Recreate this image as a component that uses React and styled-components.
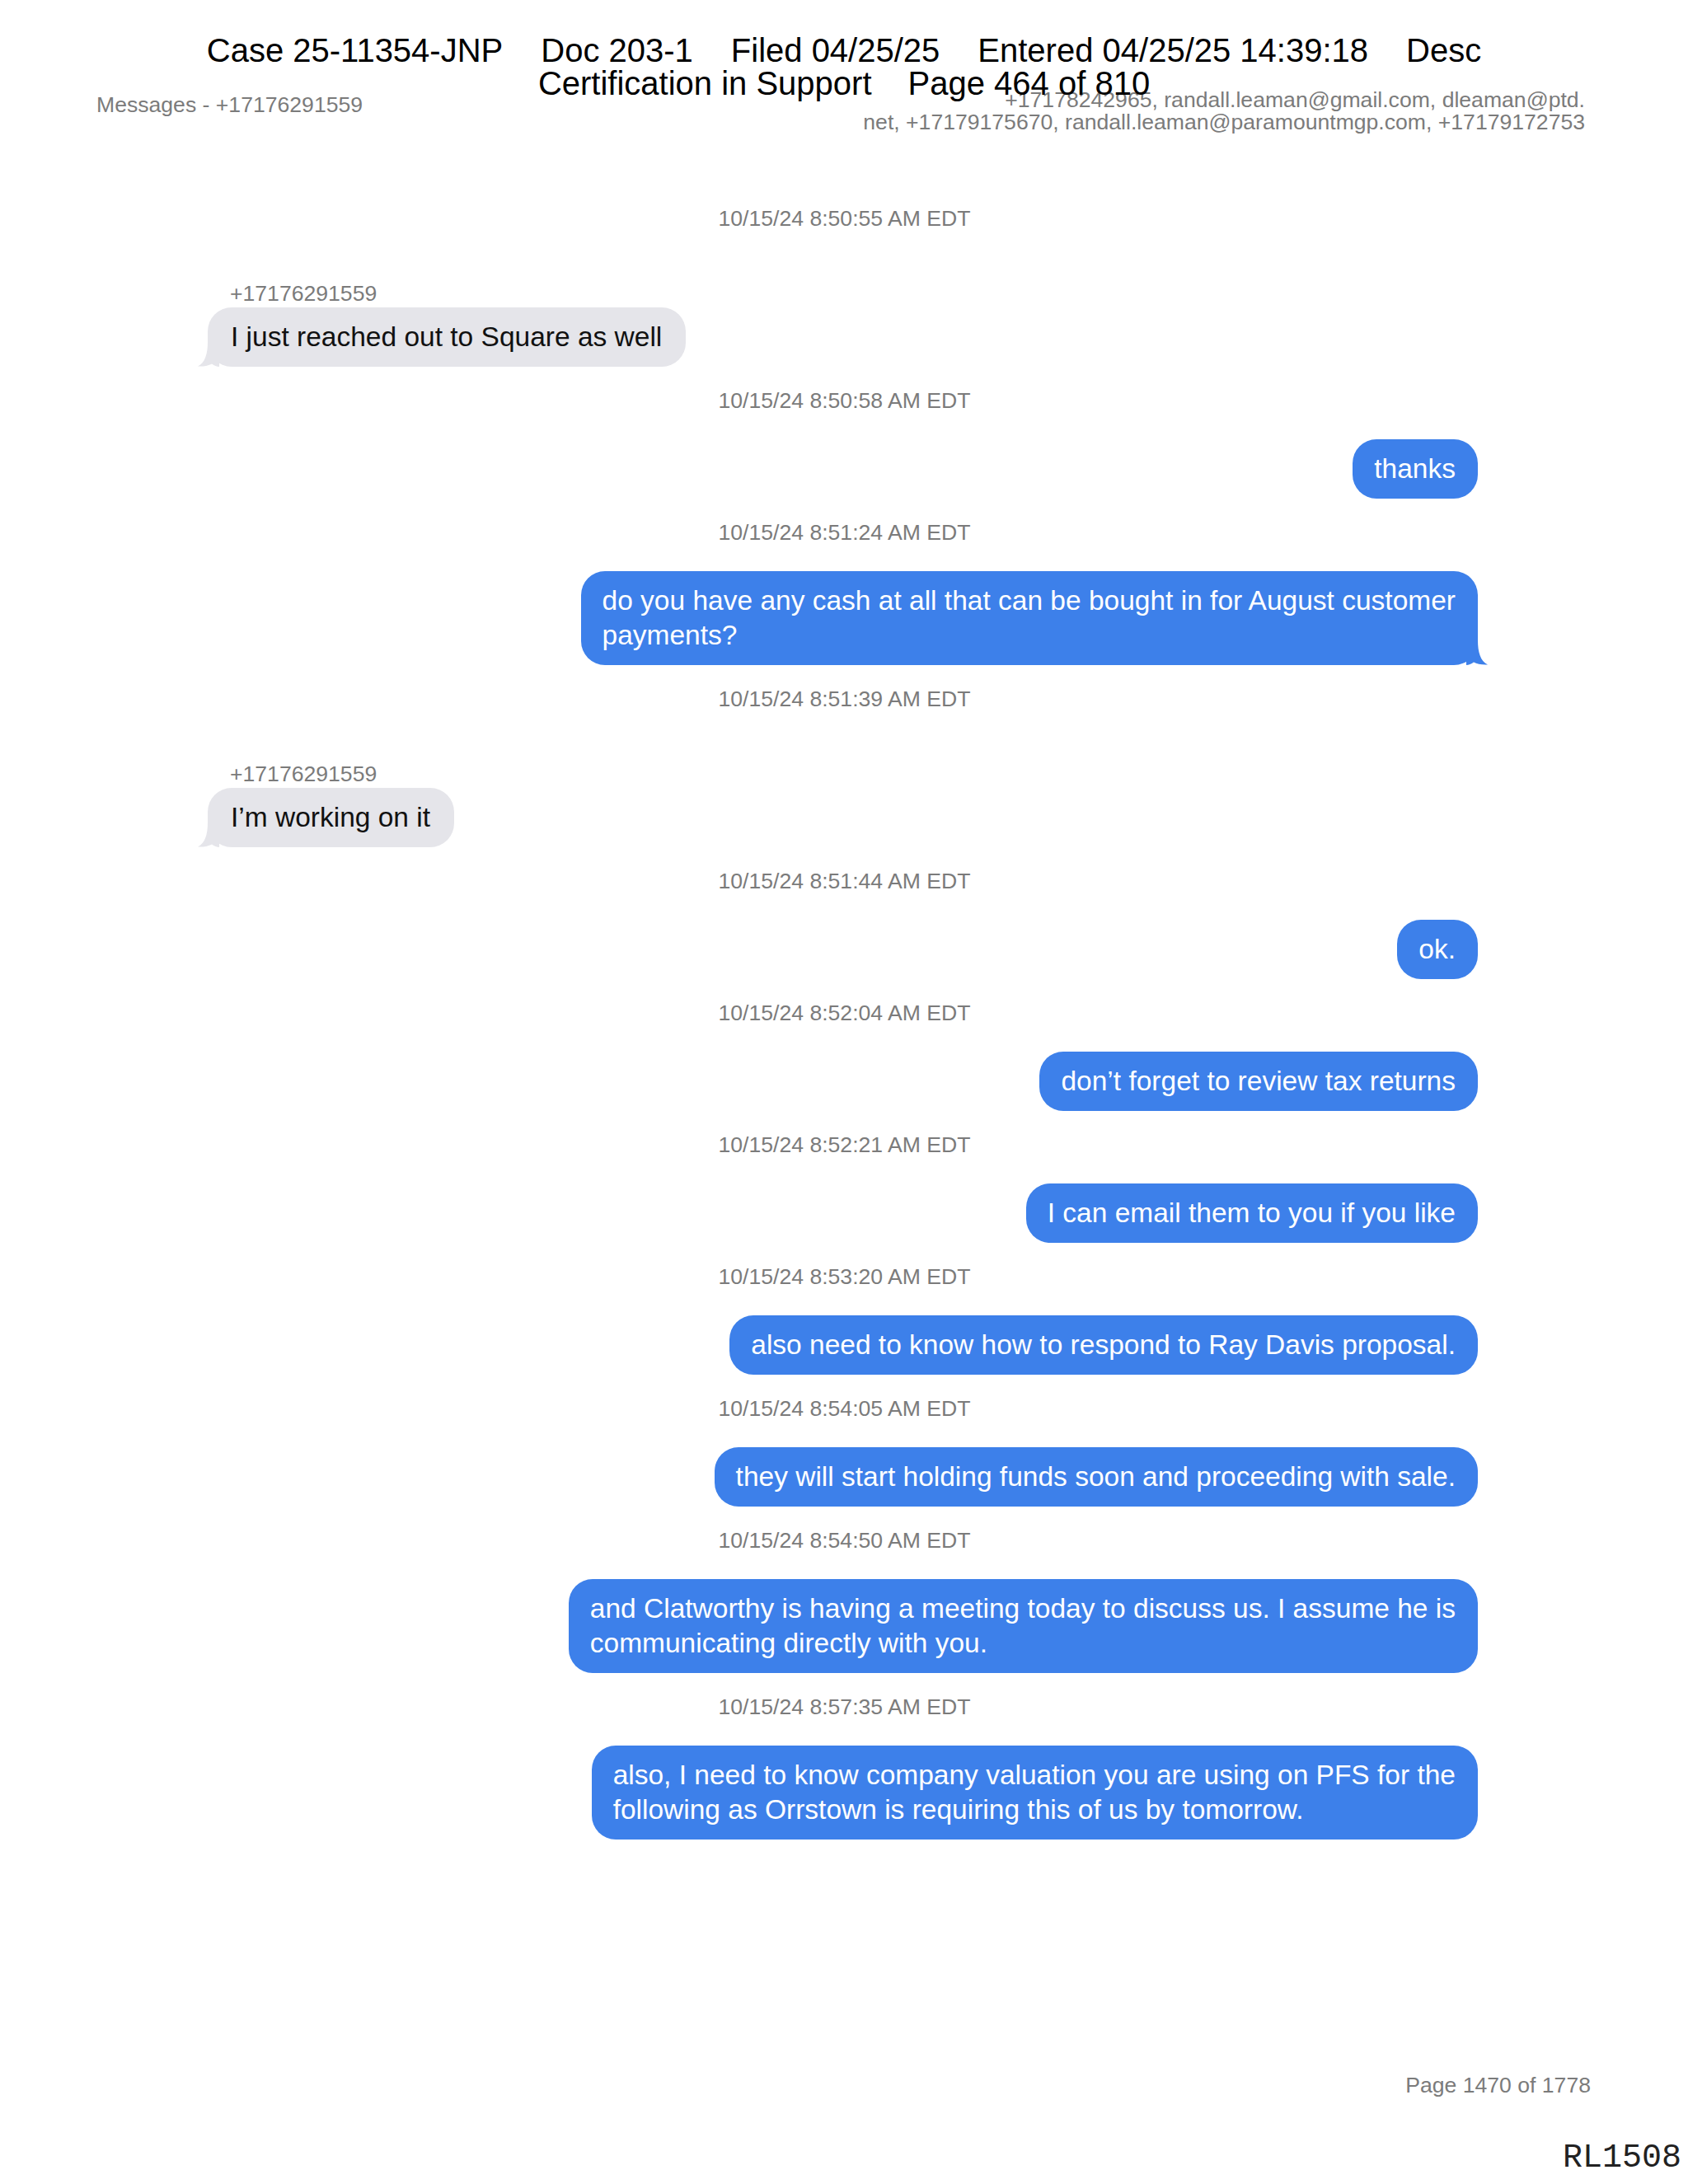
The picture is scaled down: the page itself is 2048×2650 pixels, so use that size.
import React from "react"
import styled, { createGlobalStyle } from "styled-components"

const GlobalStyle = createGlobalStyle`
  html, body {
    margin: 0;
    padding: 0;
    background: #ffffff;
  }
  body {
    font-family: "Liberation Sans", Arial, sans-serif;
  }
`

const Page = styled.div`
  position: relative;
  width: 2048px;
  min-height: 2650px;
  display: flex;
  flex-direction: column;
  background: #ffffff;
  overflow: hidden;
`

const Stamp = styled.div`
  position: absolute;
  top: 41px;
  left: 0;
  right: 0;
  display: flex;
  flex-direction: column;
  align-items: center;
  color: #000000;
  font-size: 40px;
  line-height: 40px;
  pointer-events: none;
`

const StampLine = styled.div`
  display: flex;
  gap: ${(props) => props.$gap || 46}px;
  white-space: nowrap;
`

const HeaderBar = styled.div`
  display: flex;
  justify-content: space-between;
  align-items: flex-start;
  padding: 108px 125px 0 117px;
  color: #7b7b7b;
  font-size: 26.6px;
  line-height: 27px;
`

const HeaderTitle = styled.div`
  margin-top: 6px;
  white-space: nowrap;
`

const Participants = styled.div`
  text-align: right;
  white-space: nowrap;
`

const Thread = styled.div`
  display: flex;
  flex-direction: column;
  margin: 88px 0 0 252px;
  width: 1541px;
`

const Timestamp = styled.div`
  text-align: center;
  color: #7b7b7b;
  font-size: 26.6px;
  line-height: 30px;
  margin-bottom: 32px;
  padding-left: 4px;
`

const SenderLabel = styled.div`
  color: #7b7b7b;
  font-size: 26.6px;
  line-height: 30px;
  margin: 29px 0 2px 27px;
`

const BubbleRow = styled.div`
  display: flex;
  justify-content: ${(props) => (props.$sent ? "flex-end" : "flex-start")};
  margin-bottom: 26px;
`

const Bubble = styled.div`
  position: relative;
  box-sizing: border-box;
  padding: 15px ${(props) => (props.$sent ? "27px 15px 26px" : "29px 15px 28px")};
  border-radius: 29px;
  background: ${(props) => (props.$sent ? "#3d80ea" : "#e5e5ea")};
  color: ${(props) => (props.$sent ? "#ffffff" : "#111111")};
  font-size: 33.5px;
  line-height: 42px;
  white-space: nowrap;
`

const BubbleLine = styled.span`
  display: block;
`

const Tail = styled.svg`
  position: absolute;
  bottom: 0;
  width: 26px;
  height: 30px;
  ${(props) =>
    props.$sent
      ? "right: -12px;"
      : "left: -12px; transform: scaleX(-1);"}
`

const Footer = styled.div`
  margin-top: auto;
  display: flex;
  flex-direction: column;
  align-items: flex-end;
  padding-bottom: 9px;
`

const PageNumber = styled.div`
  color: #7b7b7b;
  font-size: 26.6px;
  line-height: 30px;
  margin-right: 118px;
`

const Bates = styled.div`
  font-family: "Liberation Mono", "Courier New", monospace;
  color: #222222;
  font-size: 40px;
  line-height: 44px;
  margin: 52px 8px 0 0;
`

function BubbleTail({ sent }) {
  return (
    <Tail $sent={sent} viewBox="0 0 26 30" aria-hidden="true">
      <path
        d="M0 0 L14 0 C14 14 17 25 26 29.5 C19 30 13 28.5 9 26.5 C6 28.8 3 30 0 30 Z"
        fill={sent ? "#3d80ea" : "#e5e5ea"}
      />
    </Tail>
  )
}

const messages = [
  { time: "10/15/24 8:50:55 AM EDT", from: "+17176291559", lines: ["I just reached out to Square as well"], tail: true },
  { time: "10/15/24 8:50:58 AM EDT", sent: true, lines: ["thanks"] },
  {
    time: "10/15/24 8:51:24 AM EDT",
    sent: true,
    tail: true,
    lines: ["do you have any cash at all that can be bought in for August customer", "payments?"],
  },
  { time: "10/15/24 8:51:39 AM EDT", from: "+17176291559", lines: ["I\u2019m working on it"], tail: true },
  { time: "10/15/24 8:51:44 AM EDT", sent: true, lines: ["ok."] },
  { time: "10/15/24 8:52:04 AM EDT", sent: true, lines: ["don\u2019t forget to review tax returns"] },
  { time: "10/15/24 8:52:21 AM EDT", sent: true, lines: ["I can email them to you if you like"] },
  { time: "10/15/24 8:53:20 AM EDT", sent: true, lines: ["also need to know how to respond to Ray Davis proposal."] },
  { time: "10/15/24 8:54:05 AM EDT", sent: true, lines: ["they will start holding funds soon and proceeding with sale."] },
  {
    time: "10/15/24 8:54:50 AM EDT",
    sent: true,
    lines: ["and Clatworthy is having a meeting today to discuss us. I assume he is", "communicating directly with you."],
  },
  {
    time: "10/15/24 8:57:35 AM EDT",
    sent: true,
    lines: [
      "also, I need to know company valuation you are using on PFS for the",
      "following as Orrstown is requiring this of us by tomorrow.",
    ],
  },
]

export default function App() {
  return (
    <Page>
      <GlobalStyle />
      <HeaderBar>
        <HeaderTitle>Messages - +17176291559</HeaderTitle>
        <Participants>
          +17178242965, randall.leaman@gmail.com, dleaman@ptd.
          <br />
          net, +17179175670, randall.leaman@paramountmgp.com, +17179172753
        </Participants>
      </HeaderBar>

      <Thread>
        {messages.map((m, i) => (
          <React.Fragment key={i}>
            <Timestamp>{m.time}</Timestamp>
            {m.from && <SenderLabel>{m.from}</SenderLabel>}
            <BubbleRow $sent={m.sent}>
              <Bubble $sent={m.sent}>
                {m.lines.map((line, j) => (
                  <BubbleLine key={j}>{line}</BubbleLine>
                ))}
                {m.tail && <BubbleTail sent={m.sent} />}
              </Bubble>
            </BubbleRow>
          </React.Fragment>
        ))}
      </Thread>

      <Footer>
        <PageNumber>Page 1470 of 1778</PageNumber>
        <Bates>RL1508</Bates>
      </Footer>

      <Stamp>
        <StampLine>
          <span>Case 25-11354-JNP</span>
          <span>Doc 203-1</span>
          <span>Filed 04/25/25</span>
          <span>Entered 04/25/25 14:39:18</span>
          <span>Desc</span>
        </StampLine>
        <StampLine $gap={44}>
          <span>Certification in Support</span>
          <span>Page 464 of 810</span>
        </StampLine>
      </Stamp>
    </Page>
  )
}
